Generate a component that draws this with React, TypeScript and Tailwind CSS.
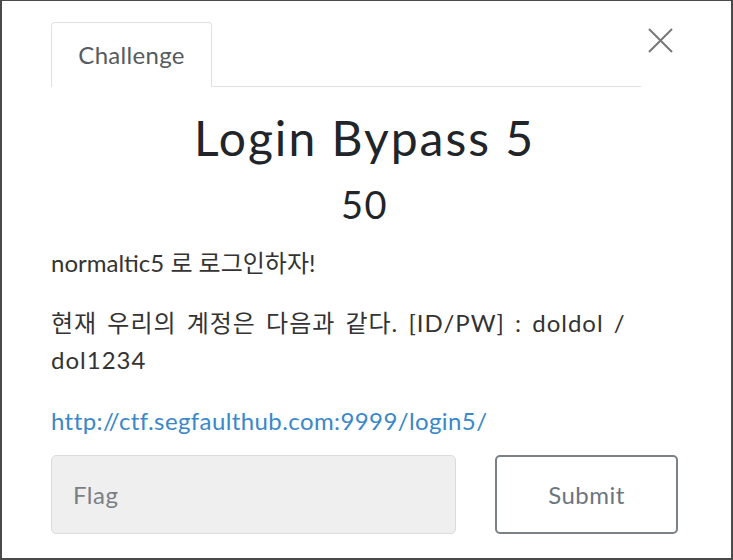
export default function App() {
  return (
    <div className="w-[733px] h-[560px] overflow-hidden bg-white border-t border-l-2 border-r-2 border-b-2 border-[#4a4a4a] font-['Lato','Noto_Sans_CJK_KR',sans-serif]">
      <div className="pl-[49px] pr-[53px] pt-[21px]">
        {/* Header: tabs + close */}
        <div className="flex items-start">
          <div className="w-[590px] h-[65px] flex border-b border-[#dee2e6]">
            <div className="w-[161px] h-[65px] flex items-center justify-center border border-b-0 border-[#dee2e6] rounded-t-[4px] bg-white text-[24px] tracking-[0.3px] text-[#555b61]">
              Challenge
            </div>
          </div>
          <button className="ml-[7px] mt-[6px] w-[25px] h-[25px] text-[#777]">
            <svg width="25" height="25" viewBox="0 0 25 25" fill="none" stroke="currentColor" strokeWidth="2">
              <path d="M1 1L24 24M24 1L1 24" />
            </svg>
          </button>
        </div>

        {/* Title */}
        <h1 className="mt-[22px] text-center text-[48px] leading-[1.2] tracking-[2px] font-normal text-[#212529]">
          Login Bypass 5
        </h1>
        <h3 className="mt-[15px] text-center text-[38px] leading-[1.2] tracking-[1.5px] font-normal text-[#212529]">
          50
        </h3>

        {/* Description */}
        <div className="mt-[17px] text-[24px] leading-[37px] text-[#333]">
          <p>normaltic5 로 로그인하자!</p>
          <p className="mt-[23px] tracking-[1px] [word-spacing:3px]">
            현재 우리의 계정은 다음과 같다. [ID/PW] : doldol / dol1234
          </p>
          <p className="mt-[24px]">
            <a className="text-[#3a87c9] tracking-[0.4px]">http://ctf.segfaulthub.com:9999/login5/</a>
          </p>
        </div>

        {/* Flag form */}
        <div className="mt-[16px] flex gap-[39px]">
          <div className="w-[405px] h-[79px] flex items-center pl-[21px] bg-[#efefef] border border-[#d9dcdf] rounded-[5px] text-[24px] tracking-[0.5px] text-[#7a7f85]">
            Flag
          </div>
          <button className="flex-1 h-[79px] flex items-center justify-center border-2 border-[#7c8186] rounded-[5px] bg-white text-[24px] tracking-[0.5px] text-[#6c757d]">
            Submit
          </button>
        </div>
      </div>
    </div>
  );
}
